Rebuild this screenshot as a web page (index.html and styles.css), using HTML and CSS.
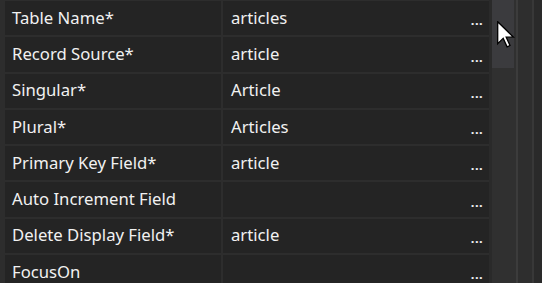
FILE: index.html
```html
<!DOCTYPE html>
<html lang="en">
<head>
<meta charset="UTF-8" />
<title>Properties</title>
<link rel="stylesheet" href="styles.css">
</head>
<body>

<div class="panel">
  <div class="grid">
    <div class="row"><div class="name">Table Name*</div><div class="value"><span>articles</span><span class="more">...</span></div></div>
    <div class="row"><div class="name">Record Source*</div><div class="value"><span>article</span><span class="more">...</span></div></div>
    <div class="row"><div class="name">Singular*</div><div class="value"><span>Article</span><span class="more">...</span></div></div>
    <div class="row"><div class="name">Plural*</div><div class="value"><span>Articles</span><span class="more">...</span></div></div>
    <div class="row"><div class="name">Primary Key Field*</div><div class="value"><span>article</span><span class="more">...</span></div></div>
    <div class="row"><div class="name">Auto Increment Field</div><div class="value"><span></span><span class="more">...</span></div></div>
    <div class="row"><div class="name">Delete Display Field*</div><div class="value"><span>article</span><span class="more">...</span></div></div>
    <div class="row"><div class="name">FocusOn</div><div class="value"><span></span><span class="more">...</span></div></div>
  </div>
  <div class="scrollbar"><div class="thumb"></div></div>
  <div class="splitter"></div>
  <div class="edge"></div>
</div>

<!-- mouse pointer over the scrollbar -->
<svg class="cursor" width="18" height="28" viewBox="0 0 18 28">
  <path d="M0.7 0.7 L0.7 22.8 L6.2 17.4 L10.1 25.8 L13 24.5 L9.2 16.2 L16.5 16.2 Z" fill="#fff" stroke="#000" stroke-width="1.3" stroke-linejoin="miter"/>
</svg>

</body>
</html>
```

FILE: styles.css
```css
body {
  margin: 0;
  background: #2d2d2d;
  font-family: "Segoe UI", "Noto Sans", sans-serif;
  color: #f1f1f1;
  overflow: hidden;
}
.panel {
  display: flex;
  height: 283px;
}
.grid {
  display: flex;
  flex-direction: column;
  gap: 2px;
  padding: 1px 0 0 5px;
  width: 484px;
}
.row {
  display: grid;
  grid-template-columns: 216px 266px;
  column-gap: 2px;
  height: 34.3px;
  flex: none;
}
.name, .value {
  background: #242424;
  display: flex;
  align-items: center;
  font-size: 16.7px;
  padding-bottom: 2px;
  box-sizing: border-box;
}
.name {
  padding-left: 7px;
}
.value {
  padding-left: 8px;
  padding-right: 6px;
  justify-content: space-between;
}
.more {
  font-size: 13px;
  font-weight: bold;
  letter-spacing: 0.4px;
  align-self: flex-end;
  padding-bottom: 4px;
}
.scrollbar {
  width: 27px;
  background: #303030;
  border-left: 3px solid #2a2a2a;
  box-sizing: border-box;
}
.thumb {
  width: 22px;
  height: 68px;
  background: #3b3b3e;
}
.splitter {
  width: 14px;
  border-left: 2px solid #3c3c3c;
  border-right: 2px solid #383838;
  background: #2e2e2e;
}
.edge {
  flex: 1;
  background: #2a2a2a;
}
.cursor {
  position: absolute;
  left: 497px;
  top: 21px;
}
```
